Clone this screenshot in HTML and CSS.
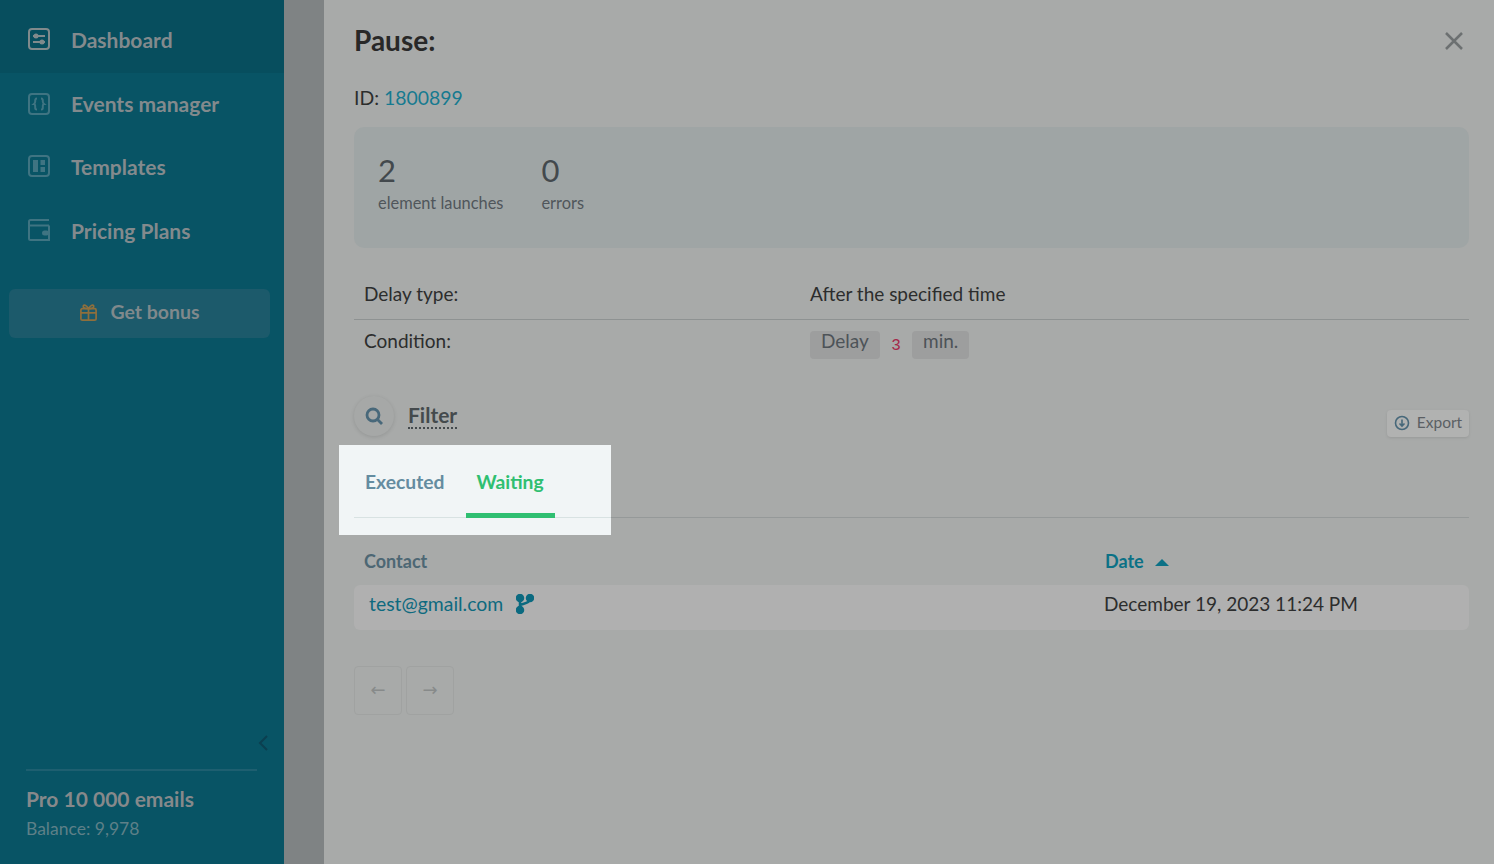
FILE: index.html
```html
<!DOCTYPE html>
<html lang="en">
<head>
  <meta charset="UTF-8">
  <title>Pause</title>
  <link rel="stylesheet" href="styles.css">
</head>
<body>
  <aside class="sidebar">
    <nav class="menu">
      <a href="#" class="menu-item active">
        <svg class="menu-icon" viewBox="0 0 22 22"><rect x="1" y="1" width="20" height="20" rx="3"/><path d="M5 8h12M5 14h12"/><circle cx="8" cy="8" r="1.500"/><circle cx="14" cy="14" r="1.500"/></svg>
        Dashboard
      </a>
      <a href="#" class="menu-item">
        <svg class="menu-icon dim" viewBox="0 0 22 22"><rect x="1" y="1" width="20" height="20" rx="3"/><path d="M9 5.500c-2 0-1.800 1.500-1.800 3S6 11 6 11s1.200 0 1.200 2.500S7 16.500 9 16.500M13 5.500c2 0 1.800 1.500 1.800 3S16 11 16 11s-1.200 0-1.200 2.500.2 3-1.800 3"/></svg>
        Events manager
      </a>
      <a href="#" class="menu-item">
        <svg class="menu-icon dim" viewBox="0 0 22 22"><rect x="1" y="1" width="20" height="20" rx="3"/><path class="solid" d="M5 5h5v12H5zM12.500 5H17v5h-4.500zM12.500 12H17v5h-4.500z"/></svg>
        Templates
      </a>
      <a href="#" class="menu-item">
        <svg class="menu-icon dim" viewBox="0 0 22 22"><path d="M21 6.500H1V2.500C1 1.700 1.700 1 2.500 1H21M1 6.500v13c0 .8.7 1.500 1.500 1.500H21V6.500"/><rect class="solid" x="14" y="11.500" width="7" height="5" rx="2.500"/></svg>
        Pricing Plans
      </a>
    </nav>
    <a href="#" class="bonus">
      <svg class="bonus-icon" viewBox="0 0 20 20"><rect x="2" y="6" width="16" height="12" rx="1.500"/><path d="M2 10.500h16M10 6v12M10 6C8 2 4.500 1 4.500 3.500 4.500 5.500 7 6 10 6zM10 6c2-4 5.500-5 5.500-2.500C15.500 5.500 13 6 10 6z"/></svg>
      Get bonus
    </a>
    <div class="side-foot">
      <svg class="collapse" viewBox="0 0 12 18"><path d="M10 2 3 9l7 7"/></svg>
      <div class="plan">
        <div class="plan-name">Pro 10 000 emails</div>
        <div class="plan-balance">Balance: 9,978</div>
      </div>
    </div>
  </aside>

  <div class="backdrop"></div>

  <main class="drawer">
    <header class="drawer-head">
      <h1>Pause:</h1>
      <svg class="close" viewBox="0 0 20 20"><path d="M2 2l16 16M18 2 2 18"/></svg>
    </header>
    <p class="id-line">ID: <a href="#">1800899</a></p>

    <section class="stats">
      <div class="stat">
        <div class="stat-num">2</div>
        <div class="stat-label">element launches</div>
      </div>
      <div class="stat">
        <div class="stat-num">0</div>
        <div class="stat-label">errors</div>
      </div>
    </section>

    <div class="info-row first">
      <div class="info-key">Delay type:</div>
      <div>After the specified time</div>
    </div>
    <div class="info-row">
      <div class="info-key">Condition:</div>
      <div class="chips">
        <span class="chip">Delay</span>
        <code class="chip-num">3</code>
        <span class="chip">min.</span>
      </div>
    </div>

    <div class="filter-bar">
      <div class="filter">
        <span class="filter-btn">
          <svg viewBox="0 0 20 20"><circle cx="9" cy="9" r="6"/><path d="m13.500 13.500 4.500 4.500"/></svg>
        </span>
        <span class="filter-text">Filter</span>
      </div>
      <button class="export">
        <svg viewBox="0 0 16 16"><circle cx="8" cy="8" r="6.500"/><path d="M8 4.500v6M5.500 8.500 8 11l2.500-2.500"/></svg>
        Export
      </button>
    </div>

    <div class="tabs">
      <div class="spotlight"></div>
      <a href="#" class="tab">Executed</a>
      <a href="#" class="tab tab-on">Waiting</a>
    </div>

    <div class="table-head">
      <div class="col-contact">Contact</div>
      <div class="col-date">Date <span class="sort-up"></span></div>
    </div>
    <div class="table-row">
      <div class="col-contact">
        <a href="#">test@gmail.com</a>
        <svg class="branch" viewBox="0 0 18 20"><circle cx="4" cy="4" r="3"/><circle cx="14" cy="4" r="3"/><circle cx="4" cy="16" r="3"/><path d="M4 4v12M14 4c0 5-4 5-10 7"/></svg>
      </div>
      <div class="col-date">December 19, 2023 11:24 PM</div>
    </div>

    <div class="pager">
      <button class="page-btn">←</button>
      <button class="page-btn">→</button>
    </div>
  </main>
</body>
</html>
```

FILE: styles.css
```css
* {
  box-sizing: border-box;
}
body {
  margin: 0;
  height: 864px;
  overflow: hidden;
  display: flex;
  font-family: "Lato", "Noto Sans", sans-serif;
  background-color: #7f8384;
}
a {
  text-decoration: none;
}

/* sidebar */
.sidebar {
  width: 284px;
  height: 864px;
  background-color: #085465;
  display: flex;
  flex-direction: column;
}
.menu {
  display: flex;
  flex-direction: column;
  height: 263px;
}
.menu-item {
  height: 63.500px;
  padding: 0 0 2px 28px;
  display: flex;
  align-items: center;
  gap: 21px;
  color: #838a8d;
  font-size: 21px;
  font-weight: 700;
}
.menu-item.active {
  height: 73px;
  padding-top: 6px;
  padding-bottom: 0;
  background-color: #074e5e;
}
.menu-item:nth-child(3) {
  margin-top: -0.500px;
}
.menu-item:nth-child(4) {
  margin-top: 0.500px;
}
.menu-icon {
  width: 22px;
  height: 22px;
  fill: none;
  stroke: #808a8c;
  stroke-width: 2;
}
.menu-icon.dim {
  stroke: #3f7482;
}
.menu-icon .solid {
  fill: #3f7482;
  stroke: none;
}
.bonus {
  margin: 26px 14px 0 9px;
  height: 49px;
  border-radius: 6px;
  background-color: #1c5a6b;
  color: #80898c;
  font-size: 19.500px;
  font-weight: 700;
  display: flex;
  align-items: center;
  justify-content: center;
  gap: 12px;
  padding-bottom: 5px;
}
.bonus-icon {
  width: 19px;
  height: 19px;
  fill: none;
  stroke: #8f6f3c;
  stroke-width: 1.800;
  margin-top: 3px;
}
.side-foot {
  margin-top: auto;
  padding: 0 27px 0 26px;
  height: 130px;
  display: flex;
  flex-direction: column;
}
.collapse {
  width: 12px;
  height: 18px;
  fill: none;
  stroke: #0b3f50;
  stroke-width: 2;
  align-self: flex-end;
  margin-right: -12px;
}
.plan {
  margin-top: 17px;
  border-top: 2px solid #1e5f70;
  padding-top: 16px;
}
.plan-name {
  color: #86898b;
  font-size: 21px;
  font-weight: 700;
  line-height: 24px;
}
.plan-balance {
  color: #5e8088;
  font-size: 17.500px;
  line-height: 22px;
  margin-top: 7px;
}

/* gap between sidebar and drawer */
.backdrop {
  width: 40px;
}

/* drawer */
.drawer {
  width: 1170px;
  height: 864px;
  background-color: #a8aaa9;
  padding: 0 25px 0 30px;
  color: #2c2d2d;
  font-size: 19px;
}
.drawer-head {
  height: 81px;
  display: flex;
  justify-content: space-between;
  align-items: center;
}
.drawer-head h1 {
  margin: -2px 0 0;
  font-size: 28px;
  font-weight: 700;
  color: #282828;
}
.close {
  width: 20px;
  height: 20px;
  margin-right: 5px;
  fill: none;
  stroke: #6c7071;
  stroke-width: 2.500;
}
.id-line {
  margin: 0;
  height: 46px;
  line-height: 34px;
  font-size: 19.400px;
}
.id-line a {
  color: #167a90;
}
.stats {
  height: 121px;
  border-radius: 10px;
  background-color: #9fa5a5;
  padding: 25px 24px;
  display: flex;
  gap: 38px;
}
.stat-num {
  font-size: 31px;
  line-height: 36px;
  color: #43494d;
}
.stat-label {
  font-size: 16.400px;
  line-height: 22px;
  margin-top: 4px;
  color: #50565b;
}
.info-row {
  display: flex;
  padding-left: 10px;
  height: 72px;
  padding-top: 8px;
  line-height: 26px;
}
.info-row.first {
  margin-top: 24px;
  height: 48px;
  padding-top: 9px;
  border-bottom: 1px solid #8e9292;
}
.info-key {
  width: 446px;
}
.chips {
  display: flex;
  gap: 5px;
  height: 28px;
  margin-top: 4px;
}
.chip {
  padding: 0 11px;
  border-radius: 4px;
  background-color: #9d9e9e;
  color: #4d5358;
  line-height: 20px;
  height: 28px;
  margin-top: -1px;
}
.chip:first-child {
  width: 70px;
}
.chip-num {
  width: 22px;
  text-align: center;
  color: #a5294a;
  font-family: "Liberation Mono", monospace;
  font-size: 16px;
  line-height: 28px;
}
.filter-bar {
  height: 49px;
  margin-top: 4px;
  display: flex;
  justify-content: space-between;
  align-items: flex-end;
}
.filter {
  display: flex;
  align-items: center;
  gap: 14px;
  margin-bottom: 9px;
  height: 40px;
}
.filter-btn {
  width: 40px;
  height: 40px;
  border-radius: 50%;
  background-color: #a6a8a7;
  box-shadow: 0 1px 4px rgba(0, 0, 0, 0.12);
  display: flex;
  align-items: center;
  justify-content: center;
}
.filter-btn svg {
  width: 20px;
  height: 20px;
  fill: none;
  stroke: #48687a;
  stroke-width: 2.800;
}
.filter-text {
  font-size: 21px;
  font-weight: 700;
  color: #444a4d;
  border-bottom: 2px dotted #444a4d;
  line-height: 24px;
}
.export {
  height: 27px;
  width: 82px;
  margin-bottom: 8px;
  border: none;
  border-radius: 4px;
  background-color: #b1b2b1;
  box-shadow: 0 1px 3px rgba(0, 0, 0, 0.1);
  font-family: inherit;
  font-size: 15.500px;
  color: #5b6064;
  display: flex;
  align-items: center;
  justify-content: center;
  gap: 7px;
  padding: 0 0 3px;
}
.export svg {
  width: 16px;
  height: 16px;
  margin-top: 2px;
  fill: none;
  stroke: #47687a;
  stroke-width: 1.600;
}

/* tabs with the tour highlight behind them */
.tabs {
  position: relative;
  height: 65px;
  margin-top: 8px;
  display: flex;
  border-bottom: 1px solid #959999;
  font-size: 19.300px;
  font-weight: 700;
}
.spotlight {
  position: absolute;
  left: -15px;
  top: -8px;
  width: 272px;
  height: 90px;
  background-color: #f1f5f6;
}
.spotlight::after {
  content: "";
  position: absolute;
  left: 15px;
  right: 0;
  top: 72px;
  border-top: 1px solid #d8e2e2;
}
.tab {
  position: relative;
  padding: 14px 11px 0;
  height: 65px;
  color: #648ca0;
  line-height: 30px;
}
.tab-on {
  color: #2fbf71;
  width: 89px;
  text-align: center;
  border-bottom: 5px solid #2fbf71;
  margin-left: 10px;
  padding-left: 0;
  padding-right: 0;
}

/* table */
.table-head {
  display: flex;
  height: 67px;
  padding: 29px 0 0 10px;
  font-size: 18px;
  font-weight: 700;
  line-height: 28px;
  color: #4d6774;
}
.col-contact {
  width: 740px;
}
.table-head .col-date {
  color: #0b7186;
  margin-left: 1px;
}
.sort-up {
  display: inline-block;
  margin-left: 7px;
  vertical-align: 2px;
  border-left: 7px solid transparent;
  border-right: 7px solid transparent;
  border-bottom: 7px solid #0b7186;
}
.table-row {
  display: flex;
  align-items: center;
  height: 45px;
  padding: 0 0 8px 15px;
  border-radius: 6px;
  background-color: #b0b0b0;
}
.table-row .col-contact {
  width: 735px;
  display: flex;
  align-items: center;
  gap: 13px;
}
.table-row a {
  color: #0e6a7f;
  font-size: 19.400px;
}
.branch {
  width: 18px;
  height: 20px;
  fill: #0b6a80;
  stroke: #0b6a80;
  stroke-width: 2.500;
}
.branch path {
  fill: none;
}
.pager {
  display: flex;
  gap: 4px;
  margin-top: 36px;
}
.page-btn {
  width: 48px;
  height: 49px;
  padding: 0 0 3px;
  border: 1px solid #a0a2a1;
  border-radius: 4px;
  background: transparent;
  color: #878a8a;
  font-size: 18px;
  font-family: "DejaVu Sans", sans-serif;
}
```
